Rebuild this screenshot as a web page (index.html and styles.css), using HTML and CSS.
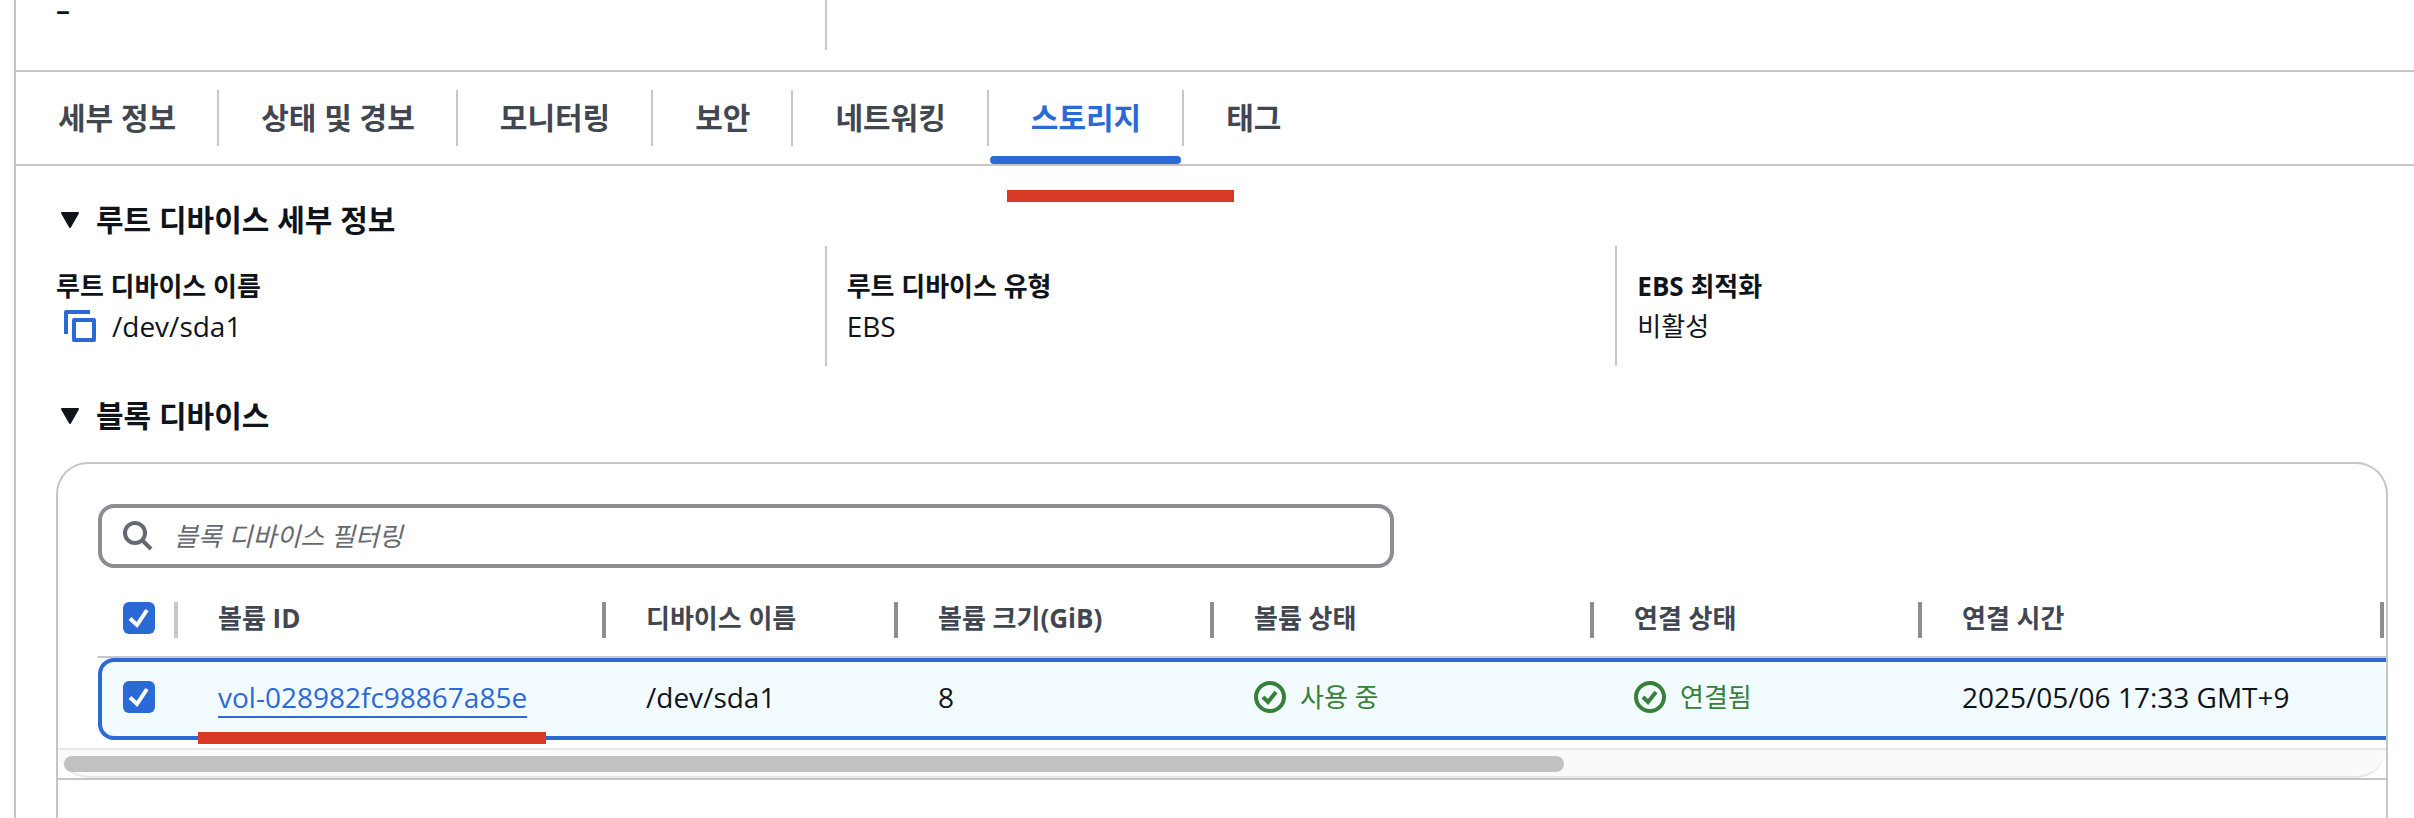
FILE: index.html
```
<!DOCTYPE html>
<html lang="ko">
<head>
    <meta charset="UTF-8">
    <meta name="viewport" content="width=device-width, initial-scale=1.0">
    <title>스토리지</title>
    <link rel="stylesheet" href="styles.css">
</head>
<body>
    <main class="panel">
        <div class="summary">
            <div class="summary-cell">–</div>
            <div class="summary-cell"></div>
        </div>

        <nav class="tabs">
            <a class="tab" href="#details">세부 정보</a>
            <a class="tab" href="#status">상태 및 경보</a>
            <a class="tab" href="#monitoring">모니터링</a>
            <a class="tab" href="#security">보안</a>
            <a class="tab" href="#networking">네트워킹</a>
            <a class="tab active" href="#storage">스토리지</a>
            <a class="tab" href="#tags">태그</a>
        </nav>

        <div class="content" id="storage">
            <h2 class="section-title">
                <button type="button" class="toggle">
                    <svg class="caret" viewBox="0 0 20 16"><path d="M2 1h16L10 15z"/></svg>
                    루트 디바이스 세부 정보
                </button>
            </h2>
            <dl class="details">
                <div class="detail">
                    <dt>루트 디바이스 이름</dt>
                    <dd class="with-copy latin">
                        <button type="button" class="copy" aria-label="복사">
                            <svg viewBox="0 0 32 32"><path d="M2 24V2h24"/><path d="M10 10h20v20H10z"/></svg>
                        </button>
                        /dev/sda1
                    </dd>
                </div>
                <div class="detail">
                    <dt>루트 디바이스 유형</dt>
                    <dd class="latin">EBS</dd>
                </div>
                <div class="detail">
                    <dt>EBS 최적화</dt>
                    <dd>비활성</dd>
                </div>
            </dl>

            <h2 class="section-title">
                <button type="button" class="toggle">
                    <svg class="caret" viewBox="0 0 20 16"><path d="M2 1h16L10 15z"/></svg>
                    블록 디바이스
                </button>
            </h2>
            <section class="card">
                <div class="filter">
                    <svg class="search-icon" viewBox="0 0 32 32"><circle cx="13" cy="13" r="10"/><path d="M20 20l9 9"/></svg>
                    <input type="text" class="filter-input" aria-label="블록 디바이스 필터링" placeholder="블록 디바이스 필터링">
                </div>

                <div class="table-wrap">
                    <table class="volumes">
                        <colgroup>
                            <col class="col-check">
                            <col class="col-id">
                            <col class="col-device">
                            <col class="col-size">
                            <col class="col-state">
                            <col class="col-attach">
                            <col class="col-time">
                            <col class="col-rest">
                        </colgroup>
                        <thead>
                            <tr>
                                <th><input type="checkbox" class="check" aria-label="모두 선택" checked></th>
                                <th>볼륨 ID</th>
                                <th>디바이스 이름</th>
                                <th>볼륨 크기(GiB)</th>
                                <th>볼륨 상태</th>
                                <th>연결 상태</th>
                                <th>연결 시간</th>
                                <th></th>
                            </tr>
                        </thead>
                        <tbody>
                            <tr>
                                <td><input type="checkbox" class="check" aria-label="볼륨 선택" checked></td>
                                <td class="marked"><a class="volume-link" href="#volume">vol-028982fc98867a85e</a></td>
                                <td>/dev/sda1</td>
                                <td>8</td>
                                <td>
                                    <span class="status">
                                        <svg viewBox="0 0 32 32"><circle cx="16" cy="16" r="14"/><path d="M9 16l5 5 8-10"/></svg>
                                        사용 중
                                    </span>
                                </td>
                                <td>
                                    <span class="status">
                                        <svg viewBox="0 0 32 32"><circle cx="16" cy="16" r="14"/><path d="M9 16l5 5 8-10"/></svg>
                                        연결됨
                                    </span>
                                </td>
                                <td>2025/05/06 17:33 GMT+9</td>
                                <td></td>
                            </tr>
                        </tbody>
                    </table>
                </div>
                <div class="scrollbar"><div class="thumb"></div></div>
                <div class="card-body"></div>
            </section>
        </div>
    </main>
</body>
</html>
```

FILE: styles.css
```
* {
    box-sizing: border-box;
}

body {
    margin: 0;
    background-color: #fff;
    color: #0f141a;
    font-family: "Open Sans", "Noto Sans CJK KR", sans-serif;
    font-size: 26px;
    line-height: 40px;
    overflow: hidden;
}

button {
    padding: 0;
    border: none;
    background: none;
    color: inherit;
    font: inherit;
    cursor: pointer;
}

.panel {
    display: flex;
    flex-direction: column;
    min-height: 100vh;
    margin-left: 14px;
    border-left: 2px solid #c6c6c6;
}

/* bottom edge of the summary grid above the tabs */
.summary {
    display: grid;
    grid-template-columns: repeat(3, 1fr);
    column-gap: 40px;
    height: 50px;
    margin: 0 26px 20px 40px;
}

.summary-cell {
    font-size: 28px;
    font-weight: 600;
    line-height: 18px;
}

.summary-cell + .summary-cell,
.detail + .detail {
    margin-left: -22px;
    padding-left: 20px;
    border-left: 2px solid #c6c6cd;
}

/* tabs */
.tabs {
    display: flex;
    align-items: center;
    height: 96px;
    border-top: 2px solid #c6c6c6;
    border-bottom: 2px solid #c6c6c6;
}

.tab {
    position: relative;
    height: 56px;
    padding: 0 41px 0 42px;
    border-right: 2px solid #c6c6cd;
    color: #424650;
    font-size: 30px;
    font-weight: 700;
    line-height: 56px;
    text-decoration: none;
}

.tab:last-child {
    border-right: none;
}

.tab.active {
    color: #2b69d6;
}

.tab.active::before {
    content: "";
    position: absolute;
    left: 1px;
    right: 1px;
    bottom: -18px;
    height: 8px;
    border-radius: 4px;
    background-color: #2b69d6;
}

/* red marker strokes */
.tab.active::after,
.marked::after {
    content: "";
    position: absolute;
    height: 12px;
    background-color: #d93a26;
}

.tab.active::after {
    left: 18px;
    right: -52px;
    bottom: -56px;
}

.content {
    display: flex;
    flex: 1;
    flex-direction: column;
    padding: 34px 26px 0 40px;
}

.section-title {
    margin: 0;
    font-size: 30px;
    font-weight: 700;
    line-height: 40px;
}

.toggle {
    display: flex;
    align-items: center;
    gap: 16px;
    padding-left: 4px;
}

.caret {
    width: 20px;
    height: 16px;
    fill: #0f141a;
    stroke: #0f141a;
    stroke-width: 2;
    stroke-linejoin: round;
}

.details {
    display: grid;
    grid-template-columns: repeat(3, 1fr);
    column-gap: 40px;
    margin: 6px 0 30px;
}

.detail {
    height: 120px;
    padding-top: 20px;
}

.detail dt {
    font-weight: 700;
}

.detail dd {
    margin: 0;
}

.detail .latin {
    font-size: 28px;
}

.with-copy {
    display: flex;
    align-items: center;
    gap: 16px;
    padding-left: 8px;
}

.copy,
.copy svg {
    display: block;
    width: 32px;
    height: 32px;
}

.copy svg {
    fill: none;
    stroke: #2b69d6;
    stroke-width: 4;
    stroke-linejoin: round;
}

/* block devices */
.card {
    display: flex;
    flex: 1;
    flex-direction: column;
    margin-top: 26px;
    border: 2px solid #c6c6c6;
    border-bottom: none;
    border-radius: 32px 32px 0 0;
    overflow: hidden;
}

.filter {
    display: flex;
    align-items: center;
    gap: 20px;
    width: calc(56% - 8px);
    height: 64px;
    margin: 40px 0 16px 40px;
    padding: 0 20px;
    border: 4px solid #8c8c94;
    border-radius: 16px;
}

.search-icon {
    width: 32px;
    height: 32px;
    fill: none;
    stroke: #656871;
    stroke-width: 4;
}

.filter-input {
    flex: 1;
    padding: 0;
    border: none;
    outline: none;
    background: none;
    font: inherit;
}

.filter-input::placeholder {
    color: #656871;
    font-style: italic;
    opacity: 1;
}

.table-wrap {
    padding: 0 0 8px 40px;
    overflow: hidden;
}

.volumes {
    width: 3500px;
    table-layout: fixed;
    border-collapse: separate;
    border-spacing: 0;
}

.col-check { width: 80px; }
.col-id { width: 428px; }
.col-device { width: 292px; }
.col-size { width: 316px; }
.col-state { width: 380px; }
.col-attach { width: 328px; }
.col-time { width: 462px; }

.volumes th {
    position: relative;
    height: 74px;
    padding: 0 0 4px 40px;
    border-bottom: 2px solid #c6c6cd;
    color: #424650;
    font-weight: 700;
    text-align: left;
}

.volumes th::after {
    content: "";
    position: absolute;
    top: 18px;
    right: 0;
    width: 4px;
    height: 36px;
    background-color: #8c8c94;
}

.volumes th:first-child::after {
    background-color: #c6c6cd;
}

.volumes td {
    height: 82px;
    padding: 0 0 4px 40px;
    border-top: 4px solid #2b69d6;
    border-bottom: 4px solid #2b69d6;
    background-color: #f2fbff;
    font-size: 28px;
}

.volumes th:first-child {
    padding-left: 25px;
}

.volumes td:first-child {
    padding-left: 21px;
    border-left: 4px solid #2b69d6;
    border-radius: 16px 0 0 16px;
}

.check {
    appearance: none;
    display: block;
    width: 32px;
    height: 32px;
    margin: 0;
    border-radius: 6px;
    background: #2b69d6 url("data:image/svg+xml,%3Csvg xmlns='http://www.w3.org/2000/svg' viewBox='0 0 32 32'%3E%3Cpath d='M7 16.5l7 6.5L24 8' fill='none' stroke='white' stroke-width='4'/%3E%3C/svg%3E");
}

.marked {
    position: relative;
}

.marked::after {
    left: 20px;
    bottom: -8px;
    width: 348px;
}

.volume-link {
    color: #2b69d6;
    text-decoration: underline;
    text-decoration-thickness: 2px;
    text-underline-offset: 8px;
}

.status {
    display: flex;
    align-items: center;
    gap: 14px;
    color: #378039;
    font-size: 26px;
}

.status svg {
    width: 32px;
    height: 32px;
    fill: none;
    stroke: #378039;
    stroke-width: 4;
}

.scrollbar {
    height: 30px;
    padding: 6px;
    border-top: 2px solid #e8e8e8;
    border-bottom: 2px solid #e8e8e8;
    border-radius: 0 0 32px 32px;
    background-color: #fafafa;
}

.thumb {
    width: calc(65% - 5px);
    height: 16px;
    border-radius: 8px;
    background-color: #c1c1c1;
}

.card-body {
    flex: 1;
    border-top: 2px solid #c6c6c6;
}
```
